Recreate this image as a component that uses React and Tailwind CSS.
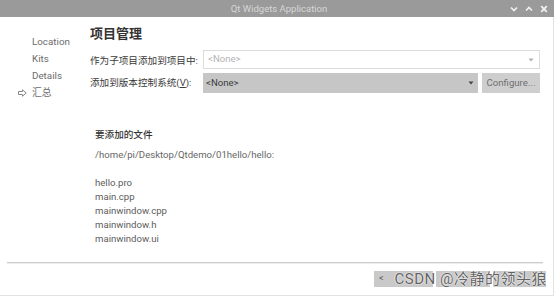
// Qt wizard "汇总" page, recreated in Tailwind
const files = ['hello.pro', 'main.cpp', 'mainwindow.cpp', 'mainwindow.h', 'mainwindow.ui']

const steps = [
  { label: 'Location' },
  { label: 'Kits' },
  { label: 'Details' },
  { label: '汇总', current: true },
]

function Arrow({ dark }) {
  return (
    <svg width="6" height="4" viewBox="0 0 6 4" className="shrink-0">
      <path d="M0.5 0.5 L3 3.5 L5.5 0.5 Z" fill={dark ? '#444' : '#b0b0b0'} />
    </svg>
  )
}

function StepArrow() {
  return (
    <svg width="9" height="8" viewBox="0 0 9 8" className="absolute -left-[14px] top-[4.5px]">
      <path
        d="M0.5 2.5 H4.5 V0.8 L8.2 4 L4.5 7.2 V5.5 H0.5 Z"
        fill="none"
        stroke="#7a7a7a"
        strokeWidth="0.9"
        strokeLinejoin="round"
      />
    </svg>
  )
}

export default function App() {
  return (
    <div className="w-[554px] h-[296px] bg-white overflow-hidden relative font-['Roboto','Noto_Sans_CJK_SC',sans-serif]">
      {/* ── Title bar ── */}
      <div className="h-[17px] bg-[#9a9a9a] flex items-center">
        <div className="w-[70px]" />
        <div className="flex-1 text-center text-[9.5px] text-[#d6d6d6] leading-none pl-[4px]">
          Qt Widgets Application
        </div>
        <div className="w-[70px] flex items-center justify-end gap-[7px] pr-[6px]">
          <svg width="8" height="6" viewBox="0 0 8 6">
            <path d="M1 1.5 L4 4.5 L7 1.5" fill="none" stroke="#f2f2f2" strokeWidth="1.6" />
          </svg>
          <svg width="8" height="6" viewBox="0 0 8 6">
            <path d="M1 4.5 L4 1.5 L7 4.5" fill="none" stroke="#f2f2f2" strokeWidth="1.6" />
          </svg>
          <svg width="8" height="8" viewBox="0 0 8 8">
            <path d="M1.2 1.2 L6.8 6.8 M6.8 1.2 L1.2 6.8" fill="none" stroke="#f2f2f2" strokeWidth="1.8" />
          </svg>
        </div>
      </div>

      {/* ── Body ── */}
      <div className="h-[279px] border-r border-b border-[#e2e2e2] flex flex-col">
        <div className="h-[245px] flex">
          {/* step list */}
          <div className="w-[90px] pt-[16px] pl-[32px] text-[9.8px] text-[#6c6c6c]">
            {steps.map((s) => (
              <div key={s.label} className="relative h-[17px] leading-[17px]">
                {s.current && <StepArrow />}
                {s.label}
              </div>
            ))}
          </div>

          {/* page content */}
          <div className="flex-1 pt-[8px] pr-[13px]">
            <h1 className="text-[13px] font-bold text-[#333] h-[17px] leading-[17px]">项目管理</h1>

            <div className="mt-[8px] flex flex-col gap-[4px] text-[9.6px] text-[#3a3a3a]">
              <div className="flex items-center h-[19px]">
                <div className="w-[113px] pt-[4px]">作为子项目添加到项目中:</div>
                <div className="flex-1 h-full border border-[#dcdcdc] bg-white flex items-center justify-between pl-[4px] pr-[5px]">
                  <span className="text-[#b4b4b4]">&lt;None&gt;</span>
                  <Arrow />
                </div>
              </div>
              <div className="flex items-center h-[20px]">
                <div className="w-[113px]">
                  添加到版本控制系统(<span className="underline">V</span>):
                </div>
                <div className="flex-1 h-full bg-[#c6c6c6] flex items-center justify-between pl-[3px] pr-[4px]">
                  <span className="text-[#3c3c3c]">&lt;None&gt;</span>
                  <Arrow dark />
                </div>
                <div className="w-[58px] h-full ml-[4px] bg-[#cecece] flex items-center justify-center text-[#6e6e6e]">
                  Configure...
                </div>
              </div>
            </div>

            <div className="mt-[35px] pl-[5px] text-[9.6px] leading-[14px] text-[#5c5c5c]">
              <div className="font-medium text-[#333]">要添加的文件</div>
              <div className="mt-[6px] text-[#666]">/home/pi/Desktop/Qtdemo/01hello/hello:</div>
              <div className="h-[14px]" />
              {files.map((f) => (
                <div key={f}>{f}</div>
              ))}
            </div>
          </div>
        </div>

        {/* separator */}
        <div className="mx-[7px] mr-[10px] border-t border-[#cccccc] border-b border-b-[#ececec]" />

        {/* buttons */}
        <div className="relative mt-[7px] flex justify-end gap-[3px] pr-[7px] text-[9px] text-[#5a5a5a]">
          <div className="w-[59px] h-[16px] bg-[#c9c9c9] flex items-center pl-[5px]">&lt;</div>
          <div className="w-[54px] h-[16px] bg-[#c9c9c9]" />
          <div className="w-[53px] h-[16px] bg-[#c9c9c9]" />
          {/* watermark */}
          <div className="absolute right-[6px] -top-[1px] text-[15px] leading-[18px] tracking-[0.5px] text-[#646464] [text-shadow:0_0_2px_#fff,0_0_1px_#fff]">
            CSDN @冷静的领头狼
          </div>
        </div>
      </div>
    </div>
  )
}
